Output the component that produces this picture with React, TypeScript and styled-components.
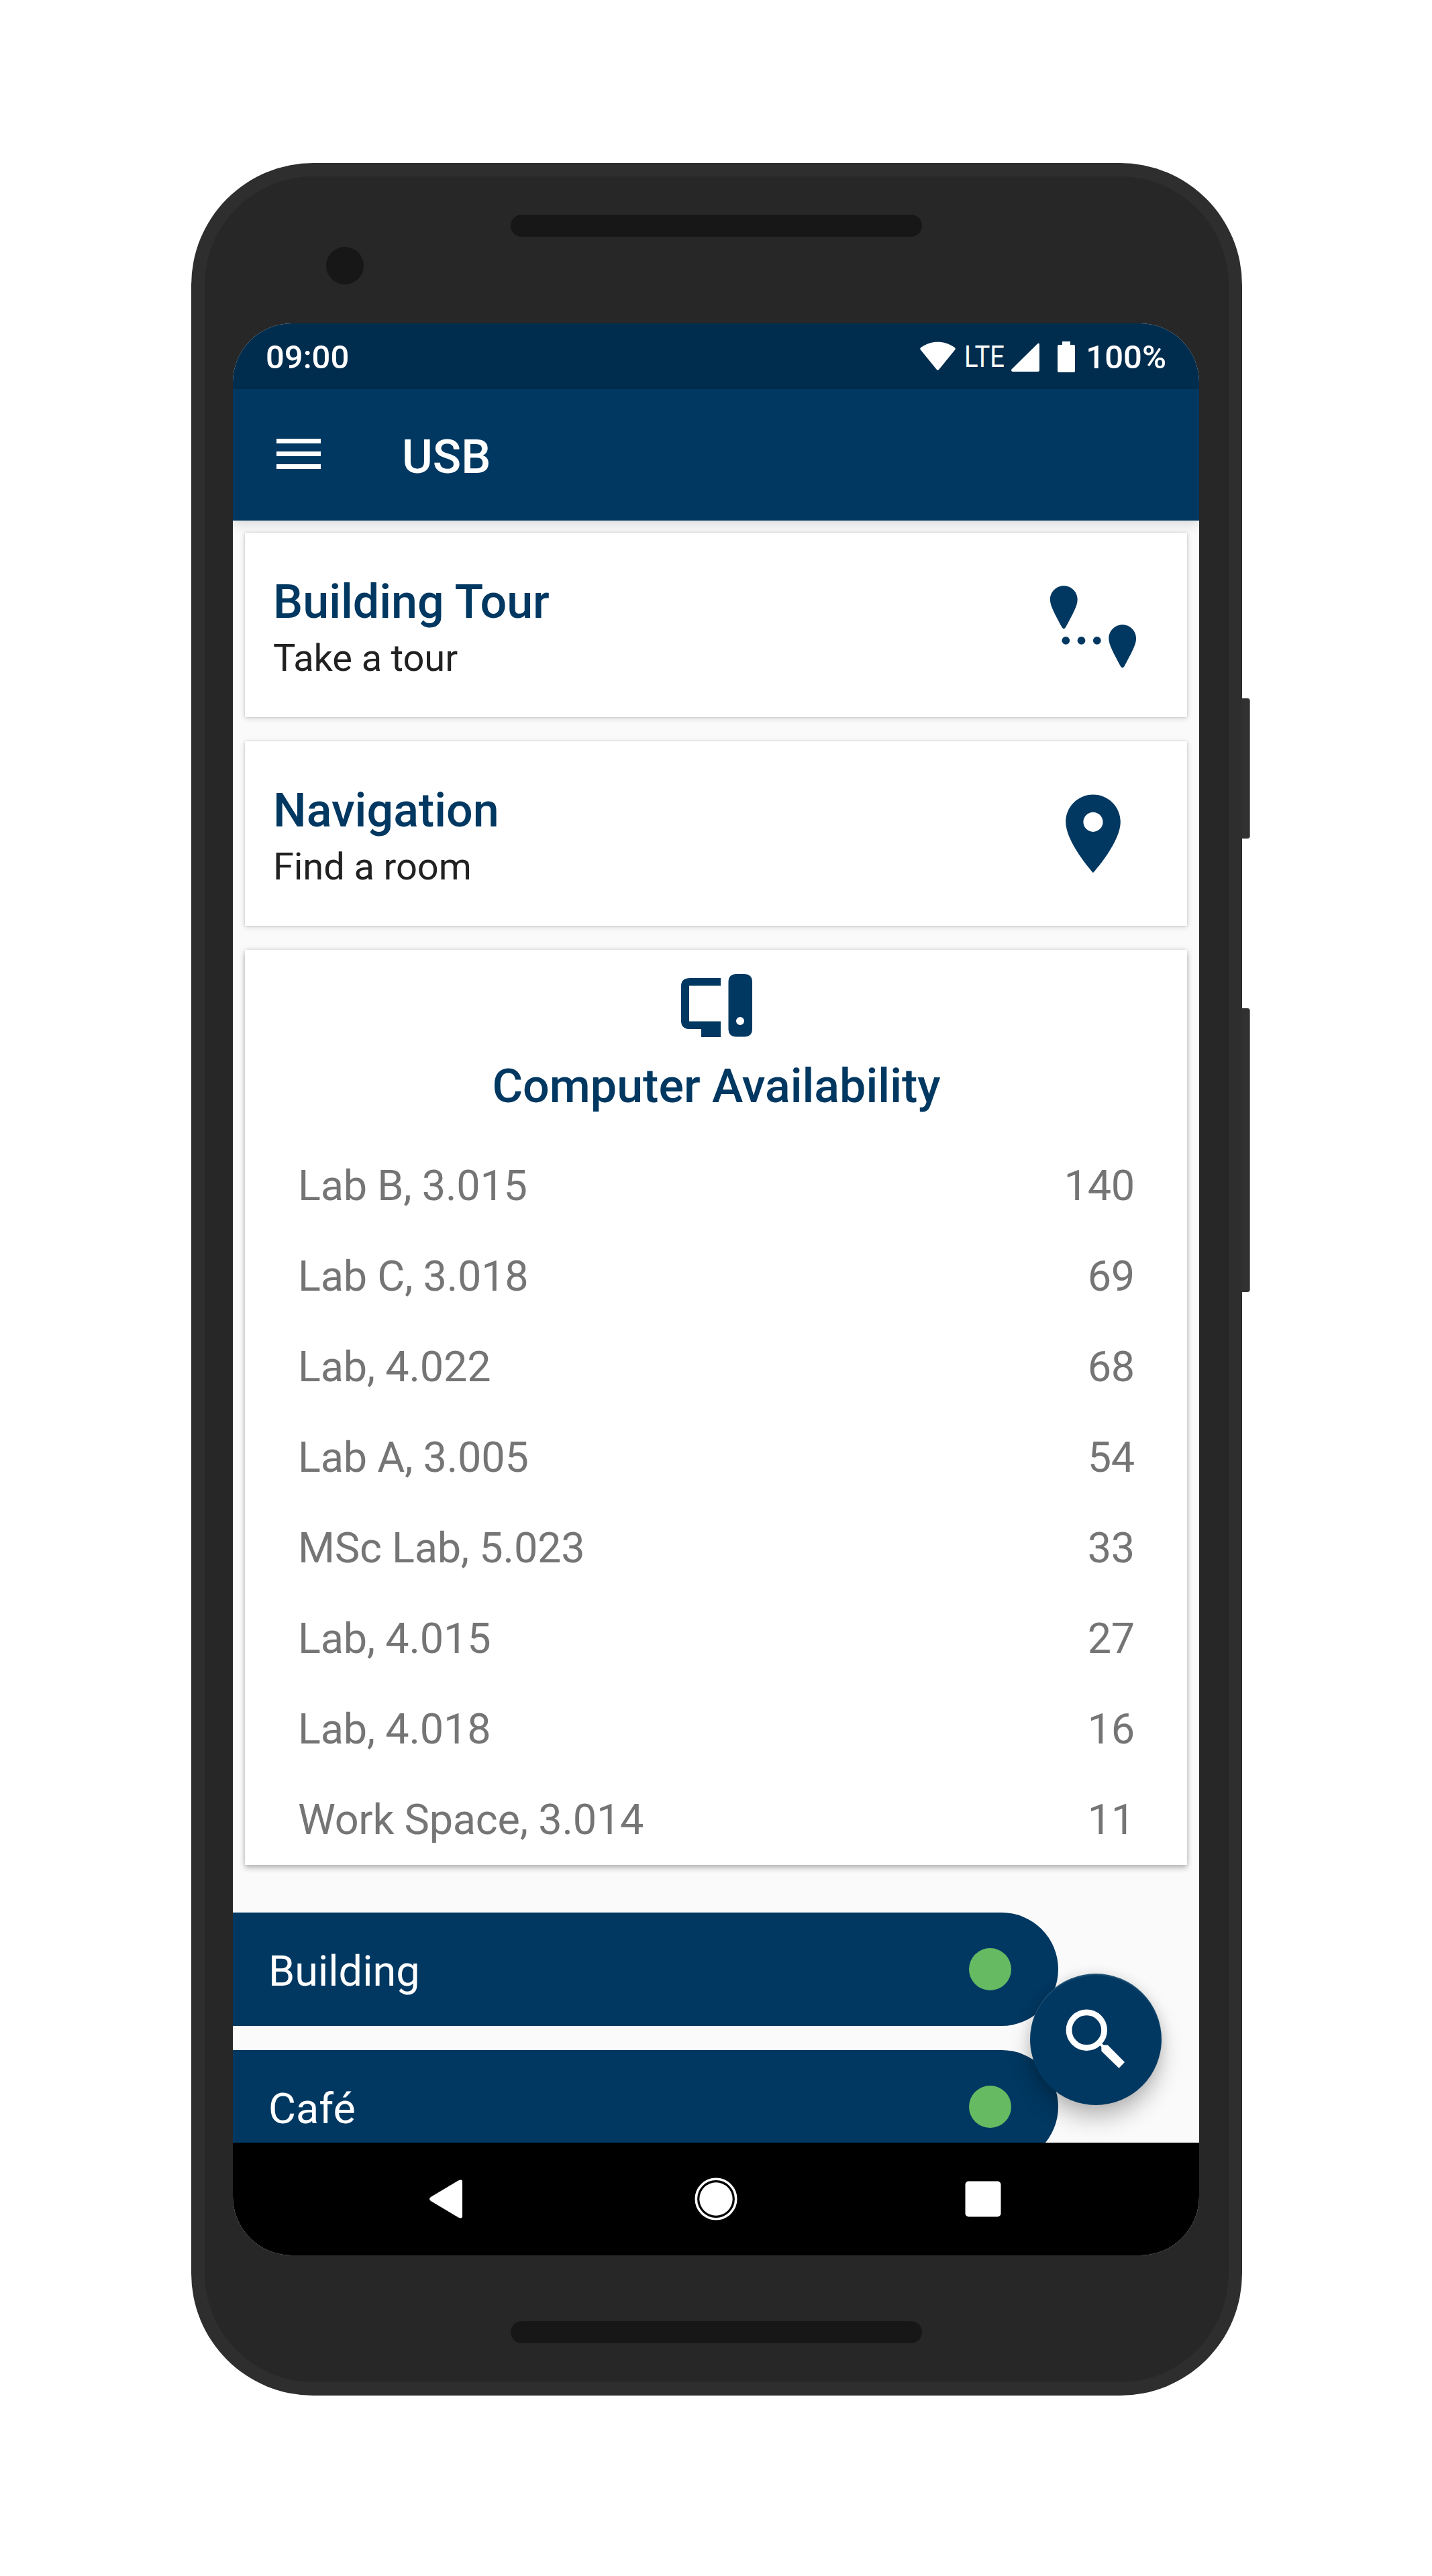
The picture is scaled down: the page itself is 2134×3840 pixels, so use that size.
import React from 'react';
import styled, { createGlobalStyle } from 'styled-components';

const NAVY = '#003861';

const Global = createGlobalStyle`
  * { box-sizing: border-box; }
  body { margin: 0; background: #fff; font-family: Roboto, "Liberation Sans", sans-serif; }
`;

const Page = styled.main`
  width: 2134px;
  height: 3840px;
  padding: 243px 0 0 285px;
  background: #fff;
  overflow: hidden;
`;

const Phone = styled.div`
  position: relative;
  width: 1566px;
  height: 3328px;
  padding: 20px;
  border-radius: 182px;
  background: #2e2e2e;
`;

const SideButton = styled.div<{ $top: number; $height: number }>`
  position: absolute;
  left: 1566px;
  top: ${(p) => p.$top}px;
  width: 12px;
  height: ${(p) => p.$height}px;
  border-right: 1px solid #777;
  border-radius: 0 4px 4px 0;
  background: #313131;
`;

const Face = styled.div`
  display: flex;
  flex-direction: column;
  align-items: center;
  height: 100%;
  padding: 57px 2px 0 0;
  border-radius: 162px;
  background: #272727;
`;

const Speaker = styled.div`
  flex: none;
  width: 613px;
  height: 33px;
  margin-left: 1px;
  border-radius: 16.5px;
  background: #171717;
`;

const Camera = styled.div`
  flex: none;
  align-self: flex-start;
  width: 56px;
  height: 56px;
  margin: 15px 0 58px 181px;
  border-radius: 50%;
  background: #171717;
`;

const Screen = styled.div`
  position: relative;
  flex: none;
  display: flex;
  flex-direction: column;
  width: 1440px;
  height: 2880px;
  margin-bottom: 98px;
  border-radius: 88px;
  background: #fafafa;
  overflow: hidden;
`;

const StatusBar = styled.div`
  flex: none;
  display: flex;
  align-items: center;
  height: 98px;
  padding: 3px 49px 0;
  background: #002d4e;
  color: #fff;
  font-size: 49px;
  font-weight: 500;
`;

const StatusIcons = styled.svg`
  display: block;
  width: 240px;
  height: 60px;
  margin: -1px 8px 0 auto;
  fill: #fff;
`;

const AppBar = styled.header`
  position: relative;
  z-index: 1;
  flex: none;
  display: flex;
  align-items: center;
  height: 196px;
  padding: 5px 65px 0;
  gap: 121px;
  background: ${NAVY};
  color: #fff;
  box-shadow: 0 6px 16px rgba(0, 0, 0, 0.13);
`;

const MenuIcon = styled.div`
  display: flex;
  flex-direction: column;
  justify-content: space-between;
  width: 66px;
  height: 45px;
  margin-top: -8px;
`;

const MenuLine = styled.span`
  height: 7px;
  background: #fff;
`;

const AppTitle = styled.h1`
  margin: 0;
  font-size: 70px;
  font-weight: 500;
`;

const Content = styled.div`
  flex: 1;
  min-height: 0;
  display: flex;
  flex-direction: column;
  padding: 18px 18px 0;
  overflow: hidden;
`;

const Card = styled.section<{ $deep?: boolean }>`
  flex: none;
  background: #fff;
  box-shadow: ${(p) =>
    p.$deep
      ? '0 5px 8px rgba(0, 0, 0, 0.22), 0 0 7px rgba(0, 0, 0, 0.15)'
      : '0 2px 8px rgba(0, 0, 0, 0.14), 0 0 3px rgba(0, 0, 0, 0.18)'};
`;

const LinkCard = styled(Card)`
  display: flex;
  align-items: center;
  justify-content: space-between;
  height: 275px;
  margin-bottom: 36px;
  padding: 0 66px 0 42px;
`;

const LinkText = styled.div`
  padding-top: 5px;
`;

const LinkTitle = styled.h2`
  margin: 0;
  color: ${NAVY};
  font-size: 70px;
  line-height: 84px;
  font-weight: 500;
`;

const LinkNote = styled.p`
  margin: 9px 0 0;
  color: #212121;
  font-size: 56px;
  line-height: 66px;
  letter-spacing: -0.1px;
`;

const CardIcon = styled.svg`
  display: block;
  width: 148px;
  height: 148px;
  fill: ${NAVY};
`;

const LabCard = styled(Card)`
  display: flex;
  flex-direction: column;
  align-items: center;
  height: 1364px;
  padding: 24px 78px 0 79px;
`;

const ComputerIcon = styled.svg`
  display: block;
  width: 120px;
  height: 120px;
  fill: ${NAVY};
`;

const LabTitle = styled(LinkTitle)`
  margin: 17px 0 39px;
`;

const LabRow = styled.div`
  display: flex;
  justify-content: space-between;
  align-items: center;
  width: 100%;
  height: 135px;
  color: #757575;
  font-size: 63px;
  letter-spacing: -0.25px;
`;

const Pills = styled.div`
  flex: none;
  display: flex;
  flex-direction: column;
  gap: 36px;
  width: 1230px;
  margin: 71px 0 0 -18px;
`;

const Pill = styled.div`
  display: flex;
  align-items: center;
  justify-content: space-between;
  height: 169px;
  padding: 0 70px 0 53px;
  border-radius: 0 84.5px 84.5px 0;
  background: ${NAVY};
  color: #fff;
  font-size: 63px;
`;

const PillLabel = styled.span`
  padding-top: 5px;
`;

const Dot = styled.span`
  width: 63px;
  height: 63px;
  border-radius: 50%;
  background: #66bb62;
`;

const Fab = styled.button`
  position: absolute;
  right: 56px;
  bottom: 224px;
  display: grid;
  place-items: center;
  width: 196px;
  height: 196px;
  padding: 0;
  border: 0;
  border-radius: 50%;
  background: ${NAVY};
  box-shadow: 0 20px 32px rgba(0, 0, 0, 0.24), 0 0 18px rgba(0, 0, 0, 0.1),
    inset 0 2px 2px rgba(255, 255, 255, 0.14);

  svg {
    width: 120px;
    height: 120px;
  }
`;

const NavBar = styled.nav`
  flex: none;
  display: flex;
  align-items: center;
  justify-content: space-between;
  height: 168px;
  padding: 0 295px 0 293px;
  background: #000;

  svg {
    display: block;
    fill: #fff;
  }
`;

const HomeIcon = styled.svg`
  width: 64px;
  height: 64px;
  margin-left: 5px;
`;

const links = [
  { title: 'Building Tour', note: 'Take a tour', icon: 'tour' },
  { title: 'Navigation', note: 'Find a room', icon: 'pin' },
];

const labs: [string, number][] = [
  ['Lab B, 3.015', 140],
  ['Lab C, 3.018', 69],
  ['Lab, 4.022', 68],
  ['Lab A, 3.005', 54],
  ['MSc Lab, 5.023', 33],
  ['Lab, 4.015', 27],
  ['Lab, 4.018', 16],
  ['Work Space, 3.014', 11],
];

const STOP = 'M0 0c-11.300 0-20.400 9.200-20.400 20.500 0 9.500 7 21.500 17.900 41.900q2.500 3.600 5 0C13.400 42 20.400 30 20.400 20.500 20.400 9.200 11.300 0 0 0z';

const TourIcon = () => (
  <CardIcon viewBox="0 0 148 148">
    <path transform="translate(30.300 15.200)" d={STOP} />
    <path transform="translate(117.700 73.300)" d={STOP} />
    <circle cx="33.300" cy="96.800" r="5.900" />
    <circle cx="56.500" cy="96.800" r="5.900" />
    <circle cx="79.800" cy="96.800" r="5.900" />
  </CardIcon>
);

const PinIcon = () => (
  <CardIcon viewBox="0 0 148 148">
    <path
      transform="translate(4 3.800) scale(5.833)"
      d="M12 2C8.130 2 5 5.130 5 9c0 5.250 7 13 7 13s7-7.750 7-13c0-3.870-3.130-7-7-7zm0 9.500c-1.380 0-2.500-1.120-2.500-2.500s1.120-2.500 2.500-2.500 2.500 1.120 2.500 2.500-1.120 2.500-2.500 2.500z"
    />
  </CardIcon>
);

export default function App() {
  return (
    <Page>
      <Global />
      <Phone>
        <SideButton $top={798} $height={209} />
        <SideButton $top={1260} $height={423} />
        <Face>
          <Speaker />
          <Camera />
          <Screen>
            <StatusBar>
              <span>09:00</span>
              <StatusIcons viewBox="1370 501 240 60">
                <path d="M1371.500 520Q1370.500 518 1373 516.500C1388 506 1407 506 1422 516.500Q1424.500 518 1423.500 520L1399.500 549.500Q1397.500 552 1395.500 549.500z" />
                <text x="1437" y="546" fontSize="44" fontWeight="400" textLength="60" lengthAdjust="spacingAndGlyphs">LTE</text>
                <path d="M1545.500 512Q1549 509 1549 513V550.500Q1549 553 1546.500 553H1509Q1506 552 1507.500 549.500z" />
                <path d="M1583 508h12v5h5q2 0 2 2v37q0 2-2 2h-22q-2 0-2-2v-37q0-2 2-2h5z" />
              </StatusIcons>
              <span>100%</span>
            </StatusBar>
            <AppBar>
              <MenuIcon>
                <MenuLine />
                <MenuLine />
                <MenuLine />
              </MenuIcon>
              <AppTitle>USB</AppTitle>
            </AppBar>
            <Content>
              {links.map((l) => (
                <LinkCard key={l.title}>
                  <LinkText>
                    <LinkTitle>{l.title}</LinkTitle>
                    <LinkNote>{l.note}</LinkNote>
                  </LinkText>
                  {l.icon === 'tour' ? <TourIcon /> : <PinIcon />}
                </LinkCard>
              ))}
              <LabCard $deep>
                <ComputerIcon viewBox="1007 1440 120 120">
                  <path d="M1073 1458h-46q-13 0-13 12v52q0 12 13 12h17v12h29v-23.500h-47v-53h47z" />
                  <path
                    fillRule="evenodd"
                    d="M1096.500 1452h11.500q12 0 12 12v69.500q0 12-12 12h-11.500q-12 0-12-12V1464q0-12 12-12zm5.500 64a6 6 0 1 0 0 12 6 6 0 1 0 0-12z"
                  />
                </ComputerIcon>
                <LabTitle>Computer Availability</LabTitle>
                {labs.map(([name, free]) => (
                  <LabRow key={name}>
                    <span>{name}</span>
                    <span>{free}</span>
                  </LabRow>
                ))}
              </LabCard>
              <Pills>
                {['Building', 'Café'].map((name) => (
                  <Pill key={name}>
                    <PillLabel>{name}</PillLabel>
                    <Dot />
                  </Pill>
                ))}
              </Pills>
            </Content>
            <NavBar>
              <svg width="50" height="58" viewBox="0 0 50 58">
                <path d="M43 1.500Q49 -1 49 3V55Q49 59 43 56.500L2 32Q-2 29 2 26z" />
              </svg>
              <HomeIcon viewBox="-32 -32 64 64">
                <circle r="29.700" fill="none" stroke="#fff" strokeWidth="3.600" />
                <circle r="24.700" />
              </HomeIcon>
              <svg width="54" height="54" viewBox="0 0 54 54">
                <rect x=".5" y=".5" width="53" height="53" rx="5" />
              </svg>
            </NavBar>
            <Fab>
              <svg viewBox="0 0 120 120">
                <circle cx="46.300" cy="46.200" r="26.300" fill="none" stroke="#fff" strokeWidth="8.800" />
                <path d="M64 64l7 7" stroke="#fff" strokeWidth="4" />
                <path d="M68.300 68.500h9.400L103 94l-8.500 9-26.200-25.500z" fill="#fff" />
              </svg>
            </Fab>
          </Screen>
          <Speaker />
        </Face>
      </Phone>
    </Page>
  );
}
